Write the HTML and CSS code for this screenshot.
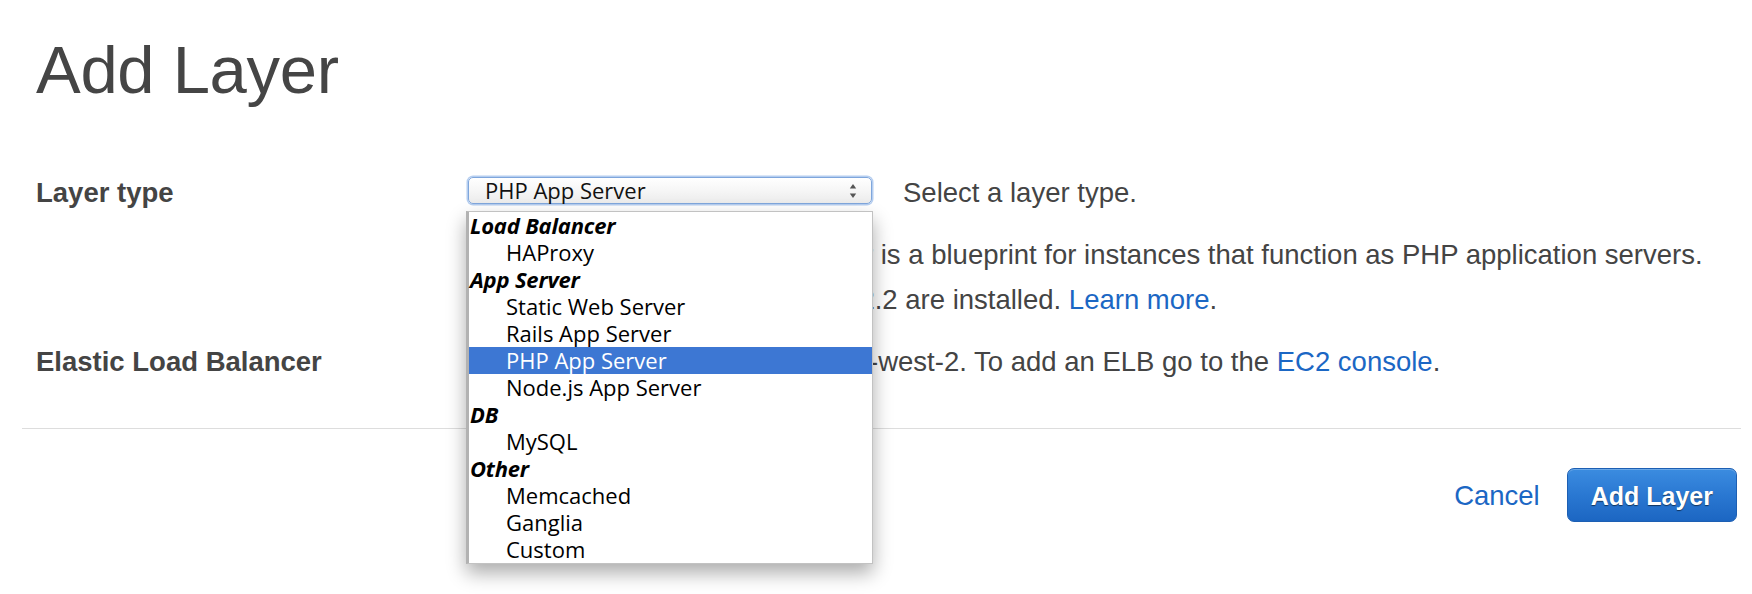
FILE: index.html
```html
<!DOCTYPE html>
<html lang="en">
<head>
<meta charset="utf-8">
<title>Add Layer</title>
<link rel="stylesheet" href="styles.css">
</head>
<body>
<div class="page">
  <h1 class="title">Add Layer</h1>

  <div class="form">
    <div class="label">Layer type</div>
    <div class="control row-select">
      <div class="select-wrap">
        <div class="select">
          <span class="select-value">PHP App Server</span>
          <svg class="select-arrows" width="8" height="16" viewBox="0 0 8 16">
            <path d="M4 1 L7.2 5.5 L0.8 5.5 Z" fill="#555"/>
            <path d="M4 15 L7.2 10.5 L0.8 10.5 Z" fill="#555"/>
          </svg>
        </div>
        <ul class="dropdown">
          <li class="group">Load Balancer</li>
          <li class="opt">HAProxy</li>
          <li class="group">App Server</li>
          <li class="opt">Static Web Server</li>
          <li class="opt">Rails App Server</li>
          <li class="opt selected">PHP App Server</li>
          <li class="opt">Node.js App Server</li>
          <li class="group">DB</li>
          <li class="opt">MySQL</li>
          <li class="group">Other</li>
          <li class="opt">Memcached</li>
          <li class="opt">Ganglia</li>
          <li class="opt">Custom</li>
        </ul>
      </div>
      <span class="help">Select a layer type.</span>
    </div>

    <div class="label"></div>
    <div class="control desc">A standard PHP App Server layer is a blueprint for instances that function as PHP application servers. By default PHP 5.3 and Apache 2.2 are installed. <a href="#" class="link">Learn more</a>.</div>

    <div class="label">Elastic Load Balancer</div>
    <div class="control desc">No ELBs were found in region us-west-2. To add an ELB go to the <a href="#" class="link">EC2 console</a>.</div>
  </div>

  <hr class="rule">

  <div class="actions">
    <a href="#" class="cancel">Cancel</a>
    <button class="primary">Add Layer</button>
  </div>
</div>
</body>
</html>
```

FILE: styles.css
```css
html, body {
  margin: 0;
  padding: 0;
  background: #ffffff;
}

body {
  min-height: 100vh;
  font-family: "Liberation Sans", Arial, Helvetica, sans-serif;
  color: #444444;
}

.page {
  margin-left: 22px;
  width: 1719px;
  padding-bottom: 70px;
}

.title {
  margin: 36px 0 0 0;
  padding-left: 14px;
  font-size: 67px;
  line-height: 67px;
  font-weight: normal;
  color: #454545;
  letter-spacing: -0.3px;
}

.form {
  margin-top: 67px;
  padding-left: 14px;
  display: grid;
  grid-template-columns: 431px 1fr;
  row-gap: 17px;
}

.label {
  font-size: 27.5px;
  font-weight: bold;
  line-height: 45px;
  color: #444444;
}

.control {
  font-size: 27.5px;
  line-height: 45px;
  color: #444444;
}

.row-select {
  display: flex;
  align-items: center;
  height: 45px;
  gap: 30px;
}

.select-wrap {
  position: relative;
  width: 406px;
  height: 29px;
  margin-bottom: 4px;
}

.select {
  box-sizing: border-box;
  margin: 1px;
  width: 404px;
  height: 27px;
  border: 1px solid #7fa6dc;
  border-radius: 5px;
  box-shadow: 0 0 0 1.5px rgba(120, 165, 228, 0.55);
  background: linear-gradient(#ffffff, #f6f6f6 50%, #ebebeb);
  display: flex;
  align-items: center;
  justify-content: space-between;
  padding: 0 14px 0 16px;
}

.select-value {
  font-family: "Open Sans", "DejaVu Sans", sans-serif;
  font-size: 22px;
  line-height: 25px;
  color: #111111;
}

.select-arrows {
  display: block;
}

.dropdown {
  position: absolute;
  left: -1px;
  top: 35px;
  width: 407px;
  box-sizing: border-box;
  margin: 0;
  padding: 0;
  list-style: none;
  background: #ffffff;
  border: 1px solid #c2c2c2;
  border-left: 3px solid #b2b2b2;
  box-shadow: 0 9px 18px rgba(0, 0, 0, 0.33);
  font-family: "Open Sans", "DejaVu Sans", sans-serif;
  font-size: 22px;
  line-height: 27px;
  color: #000000;
  z-index: 5;
}

.dropdown li {
  height: 27px;
  white-space: nowrap;
}

.dropdown .group {
  font-weight: bold;
  font-style: italic;
  padding-left: 1px;
  letter-spacing: -0.2px;
}

.dropdown .opt {
  padding-left: 37px;
}

.dropdown .selected {
  background: #3d77d3;
  color: #ffffff;
}

.help {
  font-size: 27.5px;
  line-height: 45px;
  color: #444444;
}

.desc {
  padding-right: 20px;
}

.link {
  color: #1b67c4;
  text-decoration: none;
}

.rule {
  margin: 44px 0 0 0;
  border: 0;
  height: 1px;
  background: #dddddd;
}

.actions {
  display: flex;
  justify-content: flex-end;
  align-items: center;
  gap: 27px;
  margin-top: 39px;
  padding-right: 4px;
}

.cancel {
  font-size: 27.5px;
  color: #1b67c4;
  text-decoration: none;
  padding-top: 2px;
}

.primary {
  box-sizing: border-box;
  height: 54px;
  padding: 2px 23px 0 23px;
  border: 1px solid #1d5fb3;
  border-radius: 7px;
  background: linear-gradient(#3b8ce0, #2a78d2 50%, #1c66c2);
  box-shadow: inset 0 1px 0 rgba(255, 255, 255, 0.25);
  color: #ffffff;
  font-family: "Liberation Sans", Arial, Helvetica, sans-serif;
  font-size: 25px;
  font-weight: bold;
  text-shadow: 0 1px 1px rgba(0, 0, 0, 0.55);
  cursor: pointer;
}
```
